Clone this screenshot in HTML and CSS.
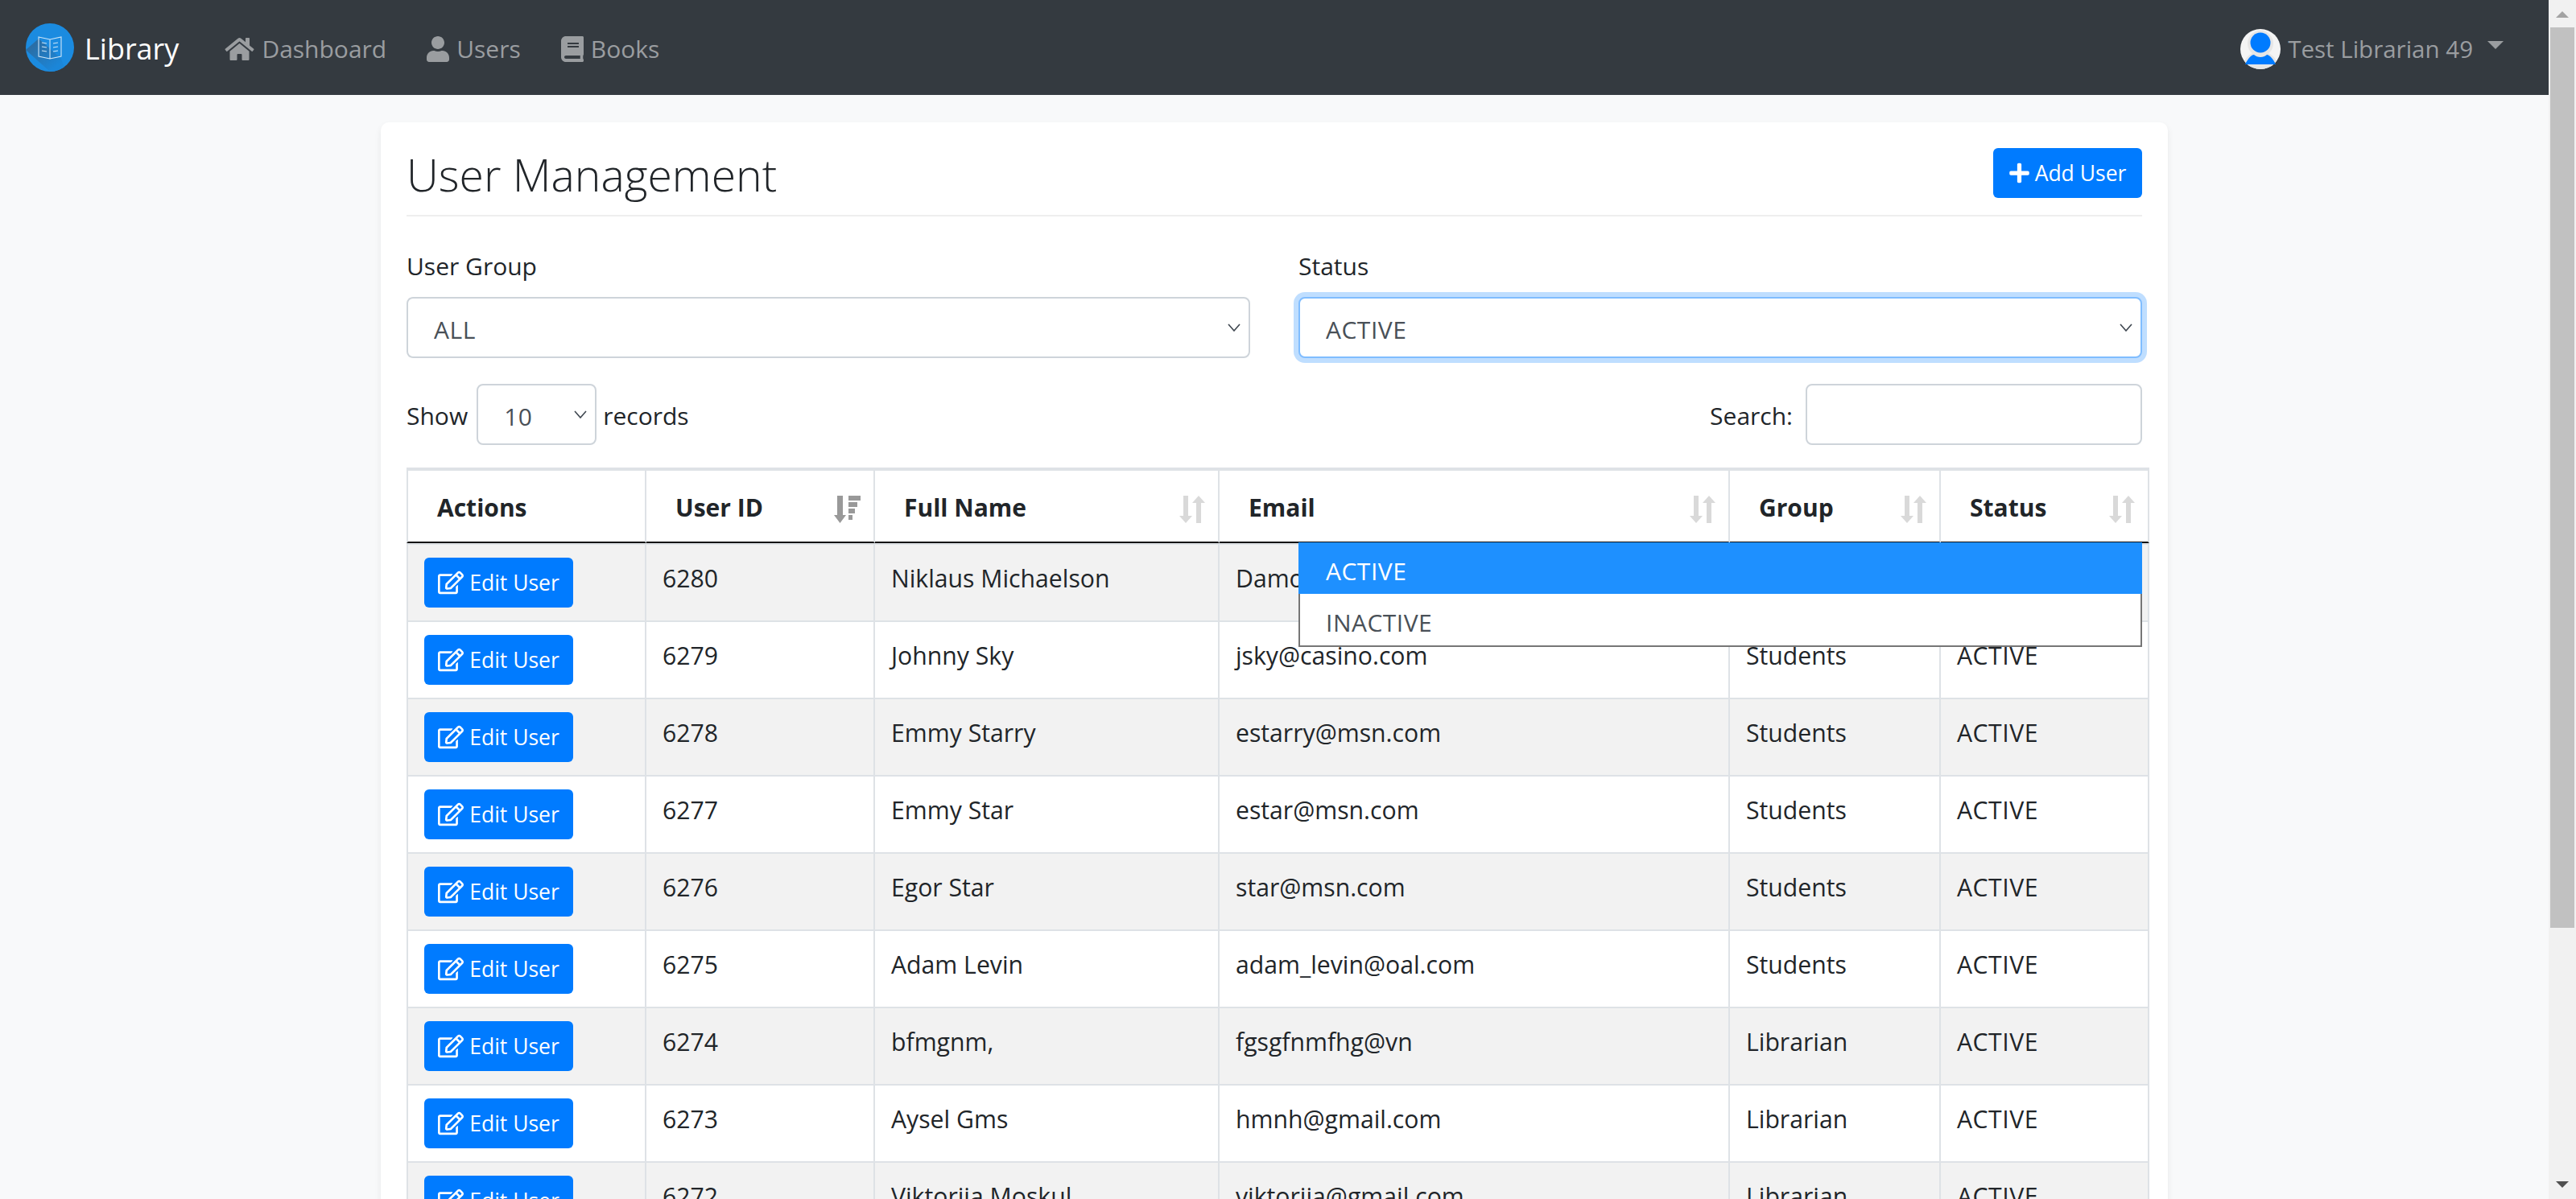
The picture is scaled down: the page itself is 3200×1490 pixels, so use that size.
FILE: index.html
```html
<!DOCTYPE html>
<html lang="en">

<head>
    <title>User Management - Library</title>
    <link rel="stylesheet" href="styles.css">
</head>

<body>
    <svg class="icon-defs" width="0" height="0">
        <symbol id="icon-edit" viewBox="0 0 576 512"><path d="M402.3 344.9l32-32c5-5 13.7-1.5 13.7 5.7V464c0 26.5-21.5 48-48 48H48c-26.5 0-48-21.5-48-48V112c0-26.5 21.5-48 48-48h273.5c7.1 0 10.7 8.6 5.7 13.7l-32 32c-1.5 1.5-3.5 2.3-5.7 2.3H48v352h352V350.5c0-2.1.8-4.1 2.3-5.6zm156.6-201.8L296.3 405.7l-90.4 10c-26.2 2.9-48.5-19.2-45.6-45.6l10-90.4L432.9 17.1c22.9-22.9 59.9-22.9 82.7 0l43.2 43.2c22.9 22.9 22.9 60 .1 82.8zM460.1 174L402 115.9 216.2 301.8l-7.3 65.3 65.3-7.3L460.1 174zm64.8-79.7l-43.2-43.2c-4.1-4.1-10.8-4.1-14.8 0L436 82l58.1 58.1 30.9-30.9c4-4.2 4-10.8-.1-14.9z"/></symbol>
        <symbol id="icon-sort" viewBox="0 0 32 34"><path d="M5 0h6v25h5l-8 9-8-9h5zM21 34h6V9h5l-8-9-8 9h5z"/></symbol>
        <symbol id="icon-chevron" viewBox="0 0 16 10"><path d="M1 1l7 8 7-8" fill="none" stroke="#3f4750" stroke-width="1.6"/></symbol>
    </svg>

    <div class="viewport">
        <nav class="navbar">
            <a class="brand" href="#">
                <svg class="brand-logo" viewBox="0 0 60 60">
                    <defs>
                        <clipPath id="logo-clip"><circle cx="30" cy="30" r="30"/></clipPath>
                        <linearGradient id="logo-shadow" x1="0" y1="0" x2="1" y2="1">
                            <stop offset="0.2" stop-color="#2a6ea6"/>
                            <stop offset="0.8" stop-color="#1b86d8"/>
                        </linearGradient>
                    </defs>
                    <circle cx="30" cy="30" r="30" fill="#1b8be0"/>
                    <path d="M16 19L0 33 30 60 50 60 44 44z" fill="url(#logo-shadow)" clip-path="url(#logo-clip)"/>
                    <path d="M16 17l14 3 14-3v24l-14 3-14-3zM30 20v24M20 24l6 1M20 29l6 1M20 34l6 1M34 25l6-1M34 30l6-1M34 35l6-1" fill="none" stroke="#cfe6f7" stroke-width="1.1"/>
                </svg>
                Library
            </a>
            <div class="nav-links">
                <a class="nav-link" href="#">
                    <svg class="nav-icon home" viewBox="0 0 576 512"><path d="M280.37 148.26L96 300.11V464a16 16 0 0 0 16 16l112.06-.29a16 16 0 0 0 15.92-16V368a16 16 0 0 1 16-16h64a16 16 0 0 1 16 16v95.64a16 16 0 0 0 16 16.05L464 480a16 16 0 0 0 16-16V300L295.67 148.26a12.19 12.19 0 0 0-15.3 0zM571.6 251.47L488 182.56V44.05a12 12 0 0 0-12-12h-56a12 12 0 0 0-12 12v72.61L318.47 43a48 48 0 0 0-61 0L4.34 251.47a12 12 0 0 0-1.6 16.9l25.5 31A12 12 0 0 0 45.15 301l235.22-193.74a12.19 12.19 0 0 1 15.3 0L530.9 301a12 12 0 0 0 16.9-1.6l25.5-31a12 12 0 0 0-1.7-16.93z"/></svg>
                    Dashboard
                </a>
                <a class="nav-link" href="#">
                    <svg class="nav-icon" viewBox="0 0 448 512"><path d="M224 256c70.7 0 128-57.3 128-128S294.7 0 224 0 96 57.3 96 128s57.3 128 128 128zm89.6 32h-16.7c-22.2 10.2-46.9 16-72.9 16s-50.6-5.8-72.9-16h-16.7C60.2 288 0 348.2 0 422.4V464c0 26.5 21.5 48 48 48h352c26.5 0 48-21.5 48-48v-41.6c0-74.2-60.2-134.4-134.4-134.4z"/></svg>
                    Users
                </a>
                <a class="nav-link" href="#">
                    <svg class="nav-icon" viewBox="0 0 448 512"><path d="M448 360V24c0-13.3-10.7-24-24-24H96C43 0 0 43 0 96v320c0 53 43 96 96 96h328c13.3 0 24-10.7 24-24v-16c0-7.5-3.5-14.3-8.9-18.7-4.2-15.4-4.2-59.3 0-74.7 5.4-4.3 8.9-11.1 8.9-18.6zM128 134c0-3.3 2.7-6 6-6h212c3.3 0 6 2.7 6 6v20c0 3.3-2.7 6-6 6H134c-3.3 0-6-2.7-6-6v-20zm0 64c0-3.3 2.7-6 6-6h212c3.3 0 6 2.7 6 6v20c0 3.3-2.7 6-6 6H134c-3.3 0-6-2.7-6-6v-20zm253.4 250H96c-17.7 0-32-14.3-32-32 0-17.6 14.4-32 32-32h285.4c-1.9 17.1-1.9 46.9 0 64z"/></svg>
                    Books
                </a>
            </div>
            <a class="user-menu" href="#">
                <svg class="avatar" viewBox="0 0 50 50">
                    <defs><clipPath id="avatar-clip"><circle cx="25" cy="25" r="25"/></clipPath></defs>
                    <circle cx="25" cy="25" r="25" fill="#f4f4f4"/>
                    <circle cx="25" cy="18" r="16" fill="#e6e6e6"/>
                    <path d="M3 50c0-14 10-22 22-22s22 8 22 22z" fill="#e6e6e6" clip-path="url(#avatar-clip)"/>
                    <circle cx="25" cy="17" r="12.5" fill="#007bff"/>
                    <path d="M6 44c3-7 8-12 11-12 2 2 5 3 8 3s6-1 8-3c3 0 8 5 11 12z" fill="#007bff"/>
                </svg>
                Test Librarian 49
                <span class="caret"></span>
            </a>
        </nav>

        <main class="container">
            <section class="card">
                <header class="card-head">
                    <h1>User Management</h1>
                    <a class="btn" href="#">
                        <svg class="btn-icon plus" viewBox="0 0 448 512"><path d="M416 208H272V64c0-17.67-14.33-32-32-32h-32c-17.67 0-32 14.33-32 32v144H32c-17.67 0-32 14.33-32 32v32c0 17.67 14.33 32 32 32h144v144c0 17.67 14.33 32 32 32h32c17.67 0 32-14.33 32-32V304h144c17.67 0 32-14.33 32-32v-32c0-17.67-14.33-32-32-32z"/></svg>
                        Add User
                    </a>
                </header>

                <div class="filters">
                    <div class="field">
                        <label for="group-filter">User Group</label>
                        <div class="select-wrap">
                            <select id="group-filter" class="form-select">
                                <option>ALL</option>
                            </select>
                            <svg class="chevron"><use href="#icon-chevron"/></svg>
                        </div>
                    </div>
                    <div class="field">
                        <label for="status-filter">Status</label>
                        <div class="select-wrap">
                            <select id="status-filter" class="form-select is-open">
                                <option>ACTIVE</option>
                                <option>INACTIVE</option>
                            </select>
                            <svg class="chevron"><use href="#icon-chevron"/></svg>
                            <ul class="select-menu">
                                <li class="selected">ACTIVE</li>
                                <li>INACTIVE</li>
                            </ul>
                        </div>
                    </div>
                </div>

                <div class="table-tools">
                    <div class="page-size">
                        <span class="tool-label">Show</span>
                        <div class="select-wrap small">
                            <select class="form-select">
                                <option>10</option>
                            </select>
                            <svg class="chevron"><use href="#icon-chevron"/></svg>
                        </div>
                        <span class="tool-label">records</span>
                    </div>
                    <div class="search">
                        <label class="tool-label" for="search-box">Search:</label>
                        <input id="search-box" class="search-input" type="text">
                    </div>
                </div>

                <table class="users-table">
                    <colgroup>
                        <col class="col-actions">
                        <col class="col-id">
                        <col class="col-name">
                        <col class="col-email">
                        <col class="col-group">
                        <col class="col-status">
                    </colgroup>
                    <thead>
                        <tr>
                            <th><div class="th-inner">Actions</div></th>
                            <th>
                                <div class="th-inner">User ID
                                    <svg class="sort-icon active" viewBox="0 0 33 34"><path d="M4 0h7v24h4l-7.500 10L0 24h4zM18 0h15v6H18zM18 8h11v6H18zM18 16h8v6H18zM18 24h5v6h-5z"/></svg>
                                </div>
                            </th>
                            <th><div class="th-inner">Full Name <svg class="sort-icon"><use href="#icon-sort"/></svg></div></th>
                            <th><div class="th-inner">Email <svg class="sort-icon"><use href="#icon-sort"/></svg></div></th>
                            <th><div class="th-inner">Group <svg class="sort-icon"><use href="#icon-sort"/></svg></div></th>
                            <th><div class="th-inner">Status <svg class="sort-icon"><use href="#icon-sort"/></svg></div></th>
                        </tr>
                    </thead>
                    <tbody>
                        <tr>
                            <td><a class="btn" href="#"><svg class="btn-icon"><use href="#icon-edit"/></svg>Edit User</a></td>
                            <td>6280</td>
                            <td>Niklaus Michaelson</td>
                            <td>Damon@gmail.com</td>
                            <td>Students</td>
                            <td>ACTIVE</td>
                        </tr>
                        <tr>
                            <td><a class="btn" href="#"><svg class="btn-icon"><use href="#icon-edit"/></svg>Edit User</a></td>
                            <td>6279</td>
                            <td>Johnny Sky</td>
                            <td>jsky@casino.com</td>
                            <td>Students</td>
                            <td>ACTIVE</td>
                        </tr>
                        <tr>
                            <td><a class="btn" href="#"><svg class="btn-icon"><use href="#icon-edit"/></svg>Edit User</a></td>
                            <td>6278</td>
                            <td>Emmy Starry</td>
                            <td>estarry@msn.com</td>
                            <td>Students</td>
                            <td>ACTIVE</td>
                        </tr>
                        <tr>
                            <td><a class="btn" href="#"><svg class="btn-icon"><use href="#icon-edit"/></svg>Edit User</a></td>
                            <td>6277</td>
                            <td>Emmy Star</td>
                            <td>estar@msn.com</td>
                            <td>Students</td>
                            <td>ACTIVE</td>
                        </tr>
                        <tr>
                            <td><a class="btn" href="#"><svg class="btn-icon"><use href="#icon-edit"/></svg>Edit User</a></td>
                            <td>6276</td>
                            <td>Egor Star</td>
                            <td>star@msn.com</td>
                            <td>Students</td>
                            <td>ACTIVE</td>
                        </tr>
                        <tr>
                            <td><a class="btn" href="#"><svg class="btn-icon"><use href="#icon-edit"/></svg>Edit User</a></td>
                            <td>6275</td>
                            <td>Adam Levin</td>
                            <td>adam_levin@oal.com</td>
                            <td>Students</td>
                            <td>ACTIVE</td>
                        </tr>
                        <tr>
                            <td><a class="btn" href="#"><svg class="btn-icon"><use href="#icon-edit"/></svg>Edit User</a></td>
                            <td>6274</td>
                            <td>bfmgnm,</td>
                            <td>fgsgfnmfhg@vn</td>
                            <td>Librarian</td>
                            <td>ACTIVE</td>
                        </tr>
                        <tr>
                            <td><a class="btn" href="#"><svg class="btn-icon"><use href="#icon-edit"/></svg>Edit User</a></td>
                            <td>6273</td>
                            <td>Aysel Gms</td>
                            <td>hmnh@gmail.com</td>
                            <td>Librarian</td>
                            <td>ACTIVE</td>
                        </tr>
                        <tr>
                            <td><a class="btn" href="#"><svg class="btn-icon"><use href="#icon-edit"/></svg>Edit User</a></td>
                            <td>6272</td>
                            <td>Viktorija Moskul</td>
                            <td>viktorija@gmail.com</td>
                            <td>Librarian</td>
                            <td>ACTIVE</td>
                        </tr>
                    </tbody>
                </table>
            </section>
        </main>
    </div>

    <div class="scrollbar">
        <span class="scroll-arrow up"></span>
        <div class="scroll-thumb"></div>
        <span class="scroll-arrow down"></span>
    </div>
</body>

</html>
```

FILE: styles.css
```css
* {
    box-sizing: border-box;
}

html,
body {
    height: 100%;
    margin: 0;
    overflow: hidden;
}

body {
    display: flex;
    font-family: "Open Sans", "Noto Sans", sans-serif;
    font-size: 30px;
    line-height: 48px;
    color: #212529;
    background-color: #f8f9fa;
}

a {
    text-decoration: none;
}

.icon-defs {
    position: absolute;
}

.viewport {
    flex: 1;
    min-width: 0;
    overflow: hidden;
}

/* top bar */
.navbar {
    display: flex;
    align-items: center;
    height: 118px;
    padding: 4px 56px 0 32px;
    background-color: #343a40;
}

.brand {
    display: flex;
    align-items: center;
    gap: 13px;
    font-size: 36px;
    color: #fff;
}

.brand-logo {
    width: 60px;
    height: 60px;
    margin-bottom: 4px;
}

.nav-links {
    display: flex;
    gap: 50px;
    margin-left: 57px;
}

.nav-link {
    display: flex;
    align-items: center;
    gap: 9px;
    color: #9a9da0;
}

.nav-icon {
    width: 28px;
    height: 32px;
    fill: #9a9da0;
}

.nav-icon.home {
    width: 37px;
}

.user-menu {
    display: flex;
    align-items: center;
    gap: 9px;
    margin-left: auto;
    font-size: 29.500px;
    color: #9a9da0;
}

.avatar {
    width: 50px;
    height: 50px;
}

.caret {
    width: 0;
    height: 0;
    margin-left: 9px;
    margin-bottom: 10px;
    border-top: 10px solid #9a9da0;
    border-left: 10px solid transparent;
    border-right: 10px solid transparent;
}

/* main card */
.container {
    width: 2280px;
    margin: 34px auto 0;
    padding: 0 30px;
}

.card {
    padding: 32px 32px 0;
    border-radius: 10px;
    background-color: #fff;
    box-shadow: 0 4px 8px rgba(0, 0, 0, 0.075);
}

.card-head {
    display: flex;
    justify-content: space-between;
    align-items: flex-start;
    height: 85px;
    border-bottom: 2px solid #eee;
}

.card-head h1 {
    margin: 2px 0 0;
    font-size: 55.300px;
    font-weight: 300;
    line-height: 62px;
}

.btn {
    display: inline-flex;
    justify-content: center;
    align-items: center;
    gap: 7px;
    width: 185px;
    height: 62px;
    border-radius: 6px;
    font-size: 26.500px;
    color: #fff;
    background-color: #007bff;
    vertical-align: top;
}

.btn-icon {
    width: 32px;
    height: 30px;
    fill: #fff;
}

.btn-icon.plus {
    width: 25px;
    height: 28px;
}

/* filters */
.filters {
    display: grid;
    grid-template-columns: 1fr 1fr;
    gap: 60px;
    margin-top: 36px;
}

.field label {
    display: block;
    padding-top: 2px;
    margin-bottom: 14px;
}

.select-wrap {
    position: relative;
}

.select-wrap.small {
    width: 149px;
    margin-left: 2px;
    margin-right: -1px;
}

.form-select {
    display: block;
    width: 100%;
    height: 76px;
    padding: 4px 32px 0;
    border: 2px solid #ced4da;
    border-radius: 8px;
    font-family: inherit;
    font-size: 30px;
    letter-spacing: 0.5px;
    color: #495057;
    background-color: #fff;
    appearance: none;
    outline: none;
}

.form-select.is-open {
    border-color: #80bdff;
    box-shadow: 0 0 0 6px rgba(0, 123, 255, 0.25);
}

.chevron {
    position: absolute;
    top: 33px;
    right: 12px;
    width: 16px;
    height: 10px;
    pointer-events: none;
}

.select-menu {
    position: absolute;
    top: 305px;
    left: 0;
    z-index: 10;
    width: 100%;
    margin: 0;
    padding: 0;
    list-style: none;
    border: 2px solid #767676;
    border-top: none;
    letter-spacing: 0.5px;
    color: #495057;
    background-color: #fff;
}

.select-menu li {
    height: 64px;
    padding: 0 32px;
    line-height: 72px;
}

.select-menu li.selected {
    margin: 0 -2px;
    padding: 0 34px;
    color: #fff;
    background-color: #1e90ff;
}

/* show + search row */
.table-tools {
    display: flex;
    justify-content: space-between;
    align-items: center;
    margin: 32px 0 28px;
}

.page-size {
    display: flex;
    align-items: center;
    gap: 9px;
}

.tool-label {
    padding-top: 4px;
}

.search {
    display: flex;
    align-items: center;
    gap: 16px;
}

.search-input {
    width: 418px;
    height: 76px;
    border: 2px solid #ced4da;
    border-radius: 8px;
    background-color: #fff;
}

/* table */
.users-table {
    table-layout: fixed;
    width: 2165px;
    border-collapse: separate;
    border-spacing: 0;
}

.col-actions {
    width: 298px;
}

.col-id {
    width: 284px;
}

.col-name {
    width: 428px;
}

.col-email {
    width: 634px;
}

.col-group {
    width: 262px;
}

.col-status {
    width: 259px;
}

.users-table th {
    height: 94px;
    padding: 4px 16px 0 36px;
    border-top: 4px solid #dee2e6;
    border-right: 2px solid #dee2e6;
    border-bottom: 2px solid #111;
    text-align: left;
    font-weight: 700;
    font-size: 30px;
}

.th-inner {
    display: flex;
    justify-content: space-between;
    align-items: center;
}

.sort-icon {
    width: 32px;
    height: 34px;
    margin-top: 4px;
    fill: #d9d9d9;
}

.sort-icon.active {
    width: 33px;
    fill: #999;
}

.users-table td {
    padding: 16px 20px;
    border-right: 2px solid #dee2e6;
    border-bottom: 2px solid #dee2e6;
    font-size: 30.200px;
    line-height: 52px;
    vertical-align: top;
}

.users-table td:last-child {
    letter-spacing: 0.5px;
}

.users-table th:first-child,
.users-table td:first-child {
    border-left: 2px solid #dee2e6;
}

.users-table tbody tr:first-child td {
    border-top: 2px solid #dee2e6;
}

.users-table tbody tr:nth-child(odd) {
    background-color: #f2f2f2;
}

/* fake page scrollbar */
.scrollbar {
    position: relative;
    flex: 0 0 34px;
    background-color: #f1f1f1;
}

.scroll-thumb {
    position: absolute;
    top: 34px;
    left: 2px;
    width: 30px;
    height: 1119px;
    background-color: #c1c1c1;
}

.scroll-arrow {
    position: absolute;
    left: 9px;
    width: 0;
    height: 0;
    border-left: 8px solid transparent;
    border-right: 8px solid transparent;
}

.scroll-arrow.up {
    top: 14px;
    border-bottom: 8px solid #a3a3a3;
}

.scroll-arrow.down {
    bottom: 14px;
    border-top: 8px solid #505050;
}
```
